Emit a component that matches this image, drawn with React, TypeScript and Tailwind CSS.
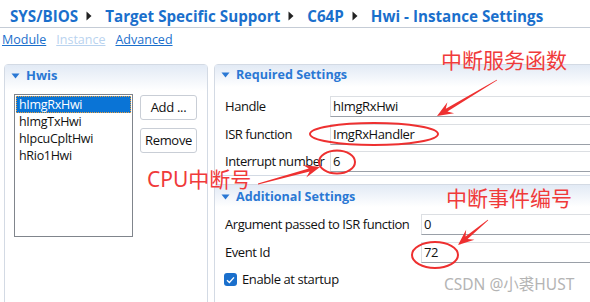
import React from "react";

const F = { fontFamily: '"Open Sans", "Noto Sans CJK SC", sans-serif' };

function arrowPts(tx: number, ty: number, hx: number, hy: number, L = 16, W = 6.5) {
  const dx = hx - tx, dy = hy - ty;
  const len = Math.hypot(dx, dy);
  const ux = dx / len, uy = dy / len;
  const nx = -uy, ny = ux;
  const neck = [hx - ux * L * 0.7, hy - uy * L * 0.7];
  const base = [hx - ux * L, hy - uy * L];
  const p = [
    [tx + nx * 0.4, ty + ny * 0.4],
    [neck[0] + nx * 1.6, neck[1] + ny * 1.6],
    [base[0] + nx * W, base[1] + ny * W],
    [hx, hy],
    [base[0] - nx * W, base[1] - ny * W],
    [neck[0] - nx * 1.6, neck[1] - ny * 1.6],
    [tx - nx * 0.4, ty - ny * 0.4],
  ];
  return p.map((q) => q.join(",")).join(" ");
}

function Tri() {
  return (
    <svg width="9" height="6" viewBox="0 0 9 6" className="shrink-0">
      <path d="M0.5 0.5 L8.5 0.5 L4.5 5.5 Z" fill="#2a78d4" />
    </svg>
  );
}

function Crumb() {
  return (
    <svg width="6" height="10" viewBox="0 0 6 10" className="shrink-0 ml-[8px] mr-[13px]">
      <path d="M0.5 0.5 L5.5 5 L0.5 9.5 Z" fill="#222" />
    </svg>
  );
}

function Row({ label, value, left, top }: { label: string; value: string; left: number; top: number }) {
  return (
    <div className="flex items-center h-[21px]" style={{ marginTop: top }}>
      <div className="shrink-0 whitespace-nowrap text-[13px] tracking-[-0.45px] text-[#111] pl-[10px]" style={{ width: left }}>{label}</div>
      <div className="flex-1 h-[21px] border border-[#dcdfe3] border-b-[#9aa0a8] bg-white flex items-center pl-[2px] text-[13px] tracking-[-0.4px] text-[#111] whitespace-nowrap">
        {value}
      </div>
    </div>
  );
}

export default function App() {
  return (
    <div className="relative w-[590px] h-[302px] overflow-hidden bg-white" style={F}>
      {/* breadcrumb */}
      <div className="h-[28px] border-b border-[#c5ccd6] flex items-center pl-[10px] pt-[5px] text-[15.2px] font-bold text-[#1a6fcc] whitespace-nowrap">
        <span>SYS/BIOS</span>
        <Crumb />
        <span>Target Specific Support</span>
        <Crumb />
        <span>C64P</span>
        <Crumb />
        <span>Hwi - Instance Settings</span>
      </div>
      {/* links */}
      <div className="h-[24px] flex items-center pl-[2px] gap-[10px] text-[12.5px]">
        <span className="underline text-[#1a6fcc]">Module</span>
        <span className="underline text-[#b9d3ef]">Instance</span>
        <span className="underline text-[#1a6fcc]">Advanced</span>
      </div>
      {/* main */}
      <div className="flex mt-[12px]">
        {/* left panel */}
        <div className="ml-[4px] w-[204px] h-[240px] border border-[#d3dae4] rounded-t-[4px] shrink-0">
          <div className="h-[26px] bg-gradient-to-b from-[#e2eaf5] to-white flex items-center pl-[6px] gap-[6px] text-[13px] font-bold text-[#2a78d4] pb-[5px]">
            <Tri />
            <span>Hwis</span>
          </div>
          <div className="flex mt-[3px] pl-[9px] gap-[7px]">
            <div className="w-[119px] h-[143px] border border-[#80858c] pt-[1px] px-[1px] text-[12.5px] tracking-[-0.3px] text-[#111] leading-[17px]">
              <div className="bg-[#0a74d6] text-white pl-[3px] outline-1 outline-dotted outline-[#e8a040] -outline-offset-1">hImgRxHwi</div>
              <div className="pl-[3px]">hImgTxHwi</div>
              <div className="pl-[3px]">hIpcuCpltHwi</div>
              <div className="pl-[3px]">hRio1Hwi</div>
            </div>
            <div className="flex flex-col gap-[8px] mt-[1px]">
              <div className="w-[57px] h-[25px] border border-[#c9ced6] rounded-[3px] flex items-center justify-center text-[13px] tracking-[-0.3px] text-[#111]">Add ...</div>
              <div className="w-[57px] h-[25px] border border-[#c9ced6] rounded-[3px] flex items-center justify-center text-[13px] tracking-[-0.3px] text-[#111]">Remove</div>
            </div>
          </div>
        </div>
        {/* right panel */}
        <div className="ml-[6px] w-[400px] shrink-0">
          <div className="border border-[#d3dae4] rounded-t-[4px] h-[112px]">
            <div className="h-[22px] bg-gradient-to-b from-[#e2eaf5] to-white flex items-center pl-[6px] gap-[6px] text-[12.6px] font-bold text-[#2a78d4] pb-[2px]">
              <Tri />
              <span>Required Settings</span>
            </div>
            <Row label="Handle" value="hImgRxHwi" left={115} top={9} />
            <Row label="ISR function" value="ImgRxHandler" left={115} top={7} />
            <Row label="Interrupt number" value="6" left={115} top={6} />
          </div>
          <div className="border border-[#d3dae4] rounded-t-[4px] mt-[8px] h-[120px]">
            <div className="h-[22px] bg-gradient-to-b from-[#e2eaf5] to-white flex items-center pl-[6px] gap-[6px] text-[12.6px] font-bold text-[#2a78d4] pt-[2px]">
              <Tri />
              <span>Additional Settings</span>
            </div>
            <Row label="Argument passed to ISR function" value="0" left={206} top={7} />
            <Row label="Event Id" value="72" left={206} top={7} />
            <div className="flex items-center pl-[9px] gap-[5px] mt-[7px] text-[13px] tracking-[-0.4px] text-[#111]">
              <div className="w-[13px] h-[13px] rounded-[3px] bg-[#1a6fcc] flex items-center justify-center">
                <svg width="9" height="8" viewBox="0 0 9 8"><path d="M1 4.2 L3.4 6.4 L8 1.4" stroke="white" strokeWidth="1.4" fill="none" /></svg>
              </div>
              <span>Enable at startup</span>
            </div>
          </div>
        </div>
      </div>

      {/* annotations */}
      <div className="absolute left-[441px] top-[46px] text-[21px] leading-[26px] text-[#f03a3a] whitespace-nowrap" style={{ fontFamily: '"Noto Sans CJK SC", sans-serif' }}>中断服务函数</div>
      <div className="absolute left-[147px] top-[166px] text-[21px] leading-[26px] text-[#f03a3a] whitespace-nowrap" style={{ fontFamily: '"Noto Sans", "Noto Sans CJK SC", sans-serif' }}>CPU中断号</div>
      <div className="absolute left-[446px] top-[184px] text-[21px] leading-[26px] text-[#f03a3a] whitespace-nowrap" style={{ fontFamily: '"Noto Sans CJK SC", sans-serif' }}>中断事件编号</div>
      <div className="absolute left-[444px] top-[274px] text-[15.5px] leading-[20px] text-[#b4b4b4] whitespace-nowrap" style={{ fontFamily: '"Noto Sans", "Noto Sans CJK SC", sans-serif' }}>CSDN @小裘HUST</div>

      <svg className="absolute inset-0 pointer-events-none" width="590" height="302">
        <ellipse cx="374" cy="134" rx="64" ry="11" fill="none" stroke="#ee3030" strokeWidth="2" />
        <ellipse cx="337" cy="162" rx="18" ry="11.5" fill="none" stroke="#ee3030" strokeWidth="2" />
        <ellipse cx="435" cy="255" rx="23" ry="13" fill="none" stroke="#ee3030" strokeWidth="2" />
        <polygon points={arrowPts(497, 80, 437, 116)} fill="#ee3030" />
        <polygon points={arrowPts(258, 184, 320, 167)} fill="#ee3030" />
        <polygon points={arrowPts(488, 220, 458, 245)} fill="#ee3030" />
      </svg>
    </div>
  );
}
